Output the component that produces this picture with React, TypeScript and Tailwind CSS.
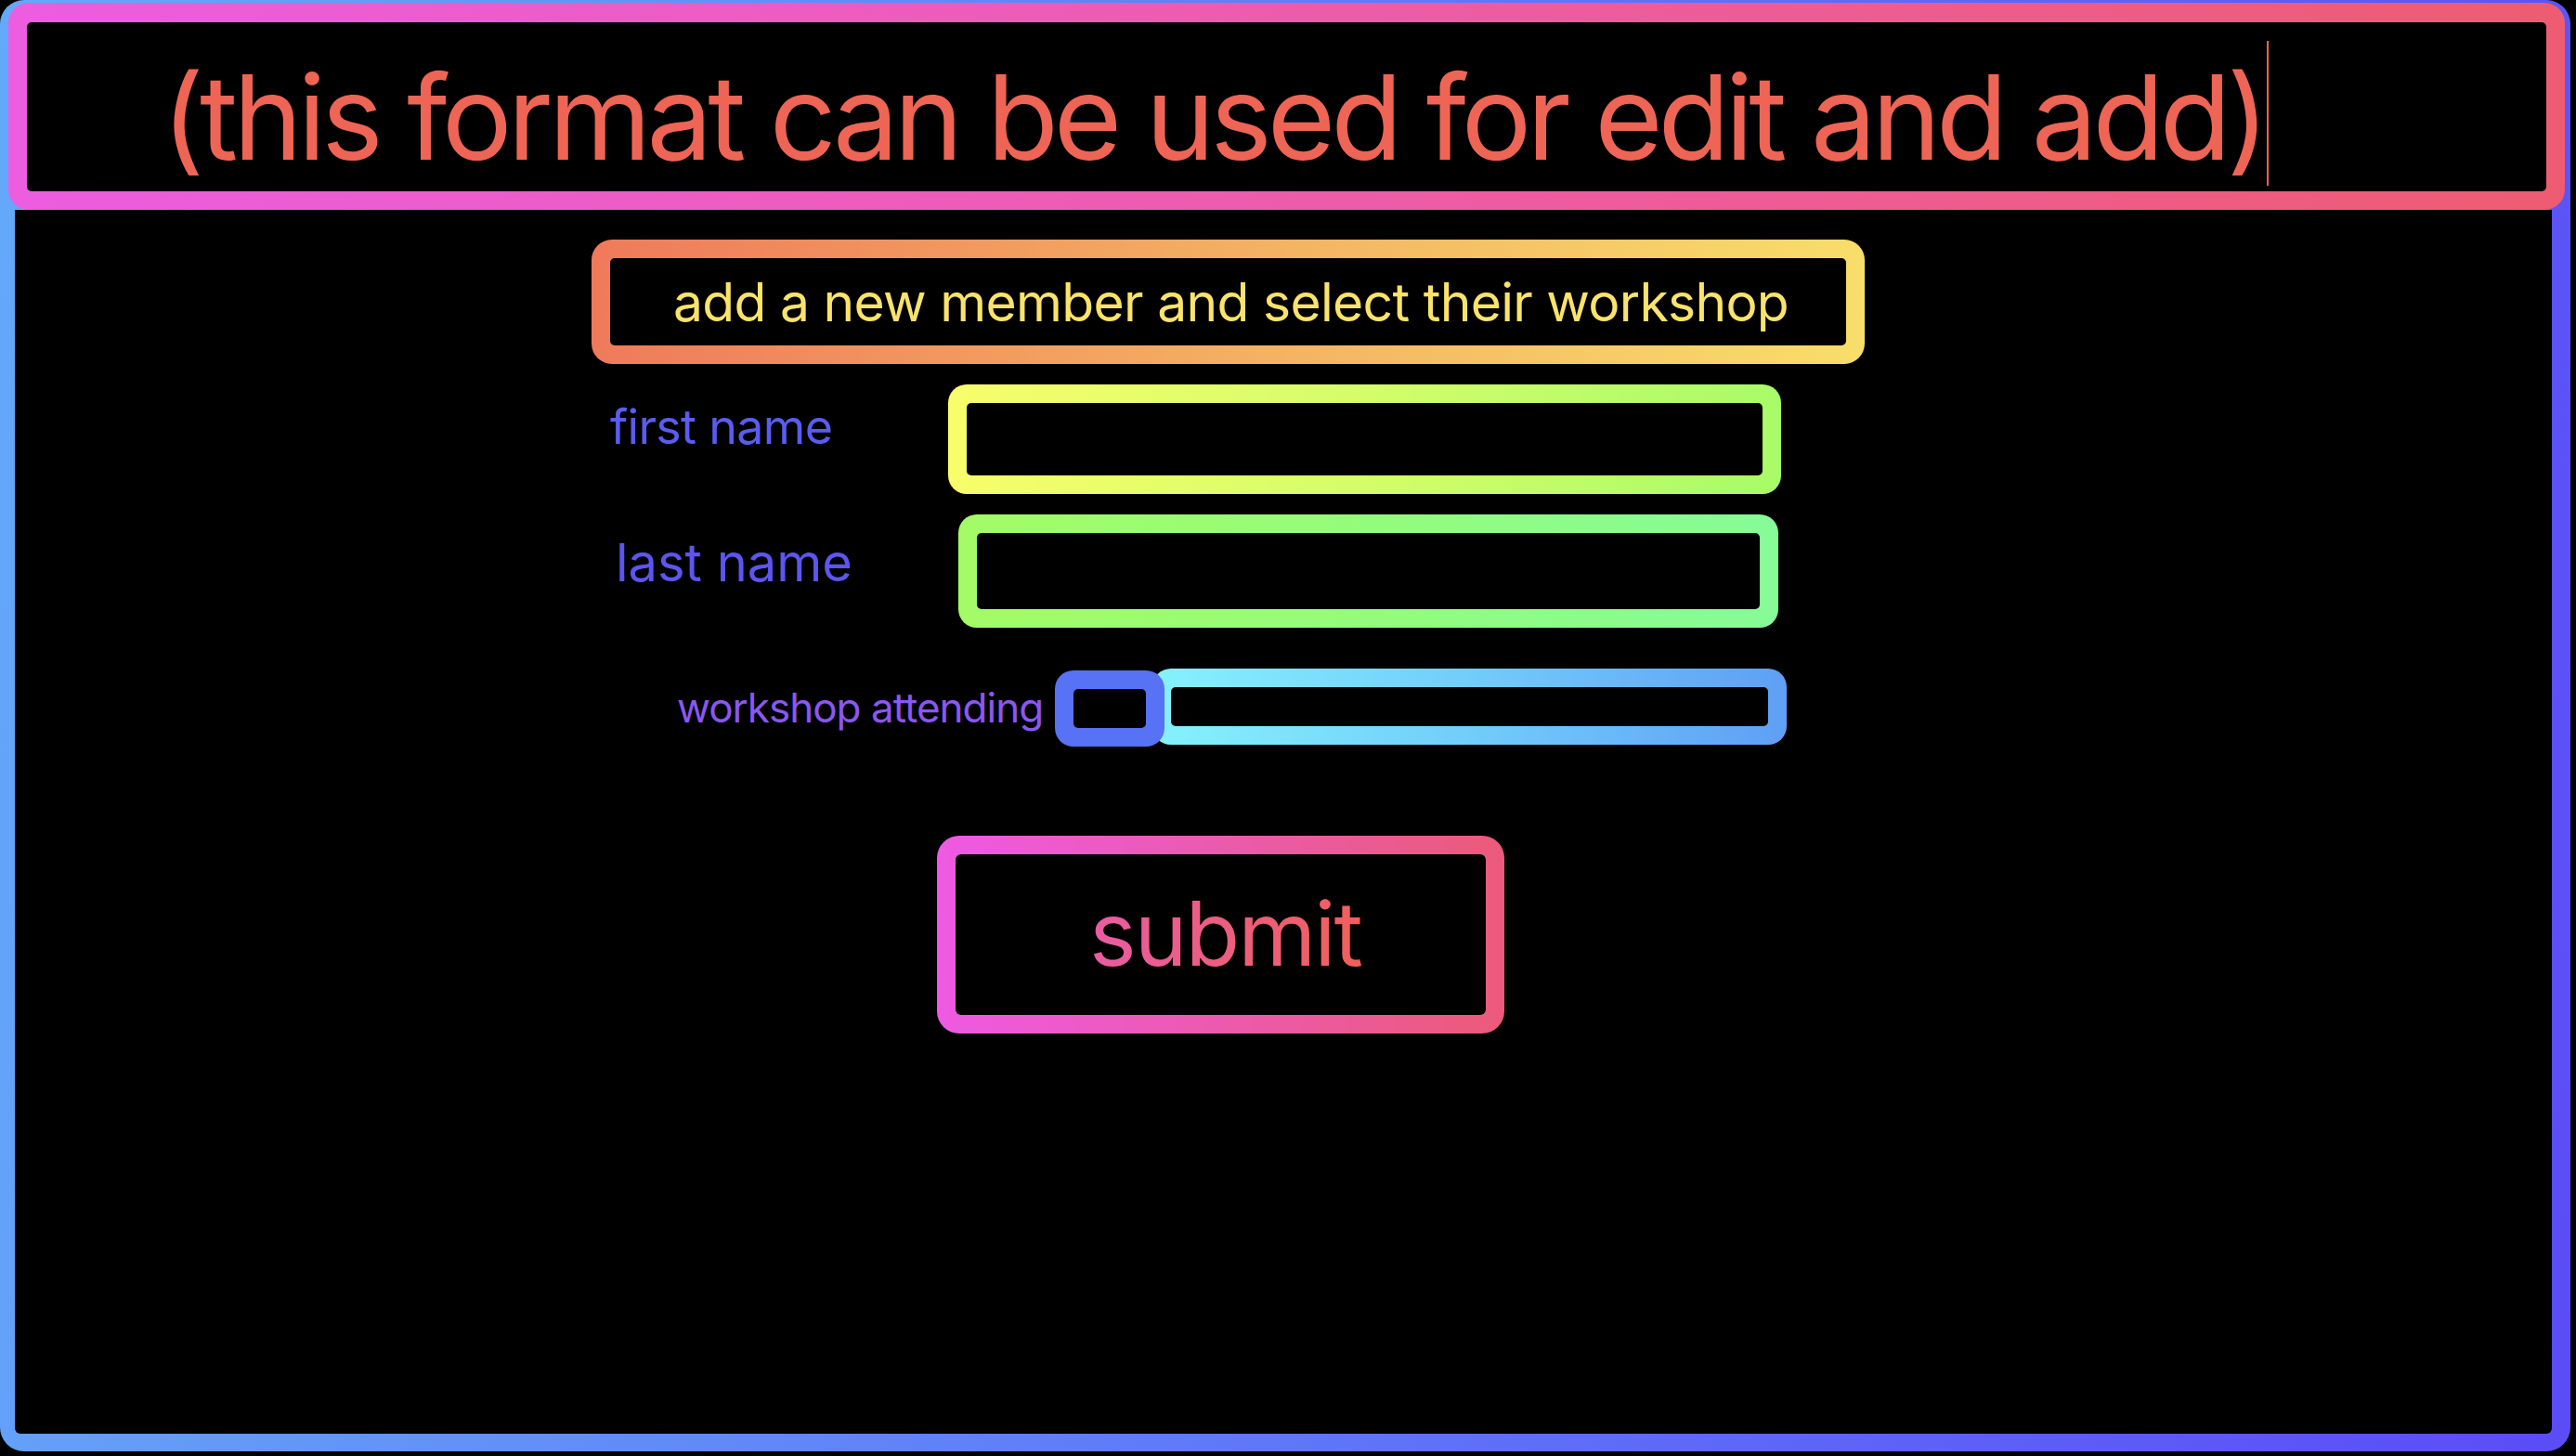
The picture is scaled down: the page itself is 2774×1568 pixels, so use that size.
import React from "react";

const font = { fontFamily: "Inter, 'Noto Sans', sans-serif" };

export default function App() {
  return (
    <div className="w-[2774px] h-[1568px] bg-black overflow-hidden" style={font}>
      <div className="w-[2768px] h-[1563px] rounded-[26px] bg-[linear-gradient(100deg,#64a9fa,#5b4cf5)] pt-[3px] pl-[9px] pr-[6px] pb-[19px] flex flex-col">
        {/* title box */}
        <div className="h-[223px] shrink-0 rounded-[22px] bg-[linear-gradient(90deg,#ec5de0,#ed5ca6_55%,#ee5c72)] pt-[21px] pb-[20px] px-[20px] flex">
          <div className="flex-1 bg-black rounded-[5px] flex items-start pl-[145px]">
            <span className="mt-[39px] text-[126px] leading-none tracking-[-5px] text-[#ee6555] whitespace-nowrap">
              (this format can be used for edit and add)
            </span>
            <span className="mt-[20px] ml-[2px] inline-block w-[2px] h-[156px] bg-[#ee6555]" />
          </div>
        </div>

        {/* content */}
        <div className="flex-1 bg-black ml-[7px] mr-[14px] rounded-b-[6px] flex flex-col">
          {/* header */}
          <div className="mt-[32px] ml-[621px] w-[1371px] h-[134px] rounded-[22px] bg-[linear-gradient(90deg,#ef7a5b,#f4b463_55%,#f8de6a)] p-[20px] flex">
            <div className="flex-1 bg-black rounded-[5px] flex justify-center items-start pl-[6px]">
              <span className="mt-[19px] text-[57px] leading-none tracking-[-0.7px] text-[#fae36b] whitespace-nowrap">
                add a new member and select their workshop
              </span>
            </div>
          </div>

          {/* first name */}
          <div className="mt-[22px] ml-[641px] flex items-start">
            <div className="w-[364px] shrink-0">
              <span className="block mt-[20px] text-[52px] leading-none tracking-[-0.7px] text-[#5a5cf0] whitespace-nowrap">first name</span>
            </div>
            <div className="w-[897px] h-[118px] rounded-[20px] bg-[linear-gradient(90deg,#f8fd6b,#d4fd69_50%,#a8fb68)] p-[20px] flex">
              <div className="flex-1 bg-black rounded-[5px]" />
            </div>
          </div>

          {/* last name */}
          <div className="mt-[22px] ml-[649px] flex items-start">
            <div className="w-[367px] shrink-0">
              <span className="block mt-[24px] -ml-[2px] text-[56px] leading-none text-[#5d55ef] whitespace-nowrap">last name</span>
            </div>
            <div className="w-[883px] h-[122px] rounded-[20px] bg-[linear-gradient(90deg,#a3fb66,#94fc7c_50%,#86fb98)] p-[20px] flex">
              <div className="flex-1 bg-black rounded-[5px]" />
            </div>
          </div>

          {/* workshop */}
          <div className="mt-[44px] ml-[715px] flex items-start">
            <div className="w-[405px] shrink-0">
              <span className="block mt-[20px] -ml-[2px] text-[44px] leading-none tracking-[-1px] text-[#8a57f0] whitespace-nowrap">workshop attending</span>
            </div>
            <div className="relative z-10 mt-[2px] w-[118px] h-[82px] shrink-0 rounded-[20px] bg-[#5772f4] p-[20px] flex">
              <div className="flex-1 bg-black rounded-[5px]" />
            </div>
            <div className="-ml-[13px] w-[683px] h-[82px] rounded-[20px] bg-[linear-gradient(90deg,#86f2fd,#72cdfa_50%,#5f9ff5)] p-[20px] flex">
              <div className="flex-1 bg-black rounded-[5px]" />
            </div>
          </div>

          {/* submit */}
          <div className="mt-[96px] ml-[993px] w-[611px] h-[213px] rounded-[24px] bg-[linear-gradient(90deg,#ee5ae2,#ec5aa8_55%,#ec5a7a)] p-[20px] flex">
            <div className="flex-1 bg-black rounded-[6px] flex justify-center items-start">
              <span className="mt-[37px] pl-[10px] text-[96px] leading-none tracking-[-2px] whitespace-nowrap bg-[linear-gradient(90deg,#e95ca6,#ef605a)] bg-clip-text text-transparent">
                submit
              </span>
            </div>
          </div>
        </div>
      </div>
    </div>
  );
}
